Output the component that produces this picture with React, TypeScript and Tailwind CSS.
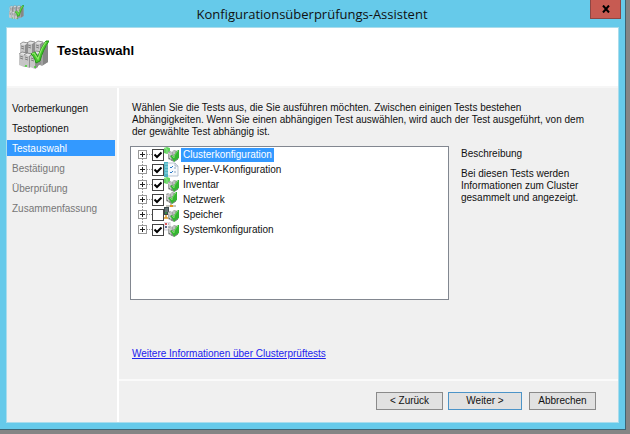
import { useState } from 'react';

type IconKind = 'cluster' | 'document' | 'network' | 'storage' | 'system';

const steps = [
  { label: 'Vorbemerkungen', state: 'done' },
  { label: 'Testoptionen', state: 'done' },
  { label: 'Testauswahl', state: 'active' },
  { label: 'Bestätigung', state: 'open' },
  { label: 'Überprüfung', state: 'open' },
  { label: 'Zusammenfassung', state: 'open' },
];

const tests: { id: string; label: string; icon: IconKind; checked: boolean }[] = [
  { id: 'cluster', label: 'Clusterkonfiguration', icon: 'cluster', checked: true },
  { id: 'hyperv', label: 'Hyper-V-Konfiguration', icon: 'document', checked: true },
  { id: 'inventory', label: 'Inventar', icon: 'cluster', checked: true },
  { id: 'network', label: 'Netzwerk', icon: 'network', checked: true },
  { id: 'storage', label: 'Speicher', icon: 'storage', checked: false },
  { id: 'system', label: 'Systemkonfiguration', icon: 'system', checked: true },
];

const servers = [
  [16, 1], [8, 1], [1, 2],
  [14, 11], [0, 12], [5, 13], [11, 14],
];

const ServerCheckIcon = ({ className }: { className: string }) => (
  <svg className={className} viewBox="0 0 30 30" aria-hidden="true">
    <path d="M19 6l6-4 4 2v18l-6 4-4-2z" fill="#a2a2a2" />
    <path d="M24 8l5-3v17l-5 3z" fill="#868686" />
    {servers.map(([x, y]) => (
      <g key={`${x}-${y}`}>
        <path d={`M${x} ${y + 2}l3-2 5 1-3 2z`} fill="#e4e4e4" />
        <path d={`M${x} ${y + 2}l5 1v12l-5-2z`} fill="#c6c6c6" />
        <path d={`M${x + 5} ${y + 3}l3-2v12l-3 2z`} fill="#8f8f8f" />
        <path d={`M${x + 1} ${y + 4}l3 1M${x + 1} ${y + 6}l3 1`} stroke="#6f6f6f" strokeWidth="0.8" />
        <path d={`M${x} ${y + 2}l3-2 5 1`} stroke="#707070" strokeWidth="0.7" fill="none" />
      </g>
    ))}
    <path d="M6 26h2M15 27h2" stroke="#3fd12c" strokeWidth="1.5" />
    <path d="M12 14l4-2 3 5c2-7 5-12 8-16h3c-4 6-7 12-9 20l-4 2c-1-4-2-6-5-9z" fill="#45c92b" stroke="#249318" strokeWidth="1" />
    <path d="M13 14l2-1 4 6c2-7 4-12 8-17" stroke="#93ea6c" strokeWidth="1.2" fill="none" />
  </svg>
);

const TestIcon = ({ kind }: { kind: IconKind }) => {
  if (kind === 'document') {
    return (
      <svg className="h-[15px] w-[15px]" viewBox="0 0 15 15" aria-hidden="true">
        <path d="M3 1h8l3 3v10H3z" fill="#f6f9fc" stroke="#a9b6c6" strokeWidth="0.8" />
        <path d="M0 0h4v15H0z" fill="#4fb3c4" />
        <path d="M1 2h3M1 5h3M1 8h3M1 11h3" stroke="#9addE4" />
        <path d="M11 1v3h3" fill="none" stroke="#9aa9ba" strokeWidth="0.8" />
        <path d="M6 5l1 1 2-2M6 10l1 1 2-2" fill="none" stroke="#2d79c7" />
        <path d="M10 6h2M10 10h2" stroke="#8ba6c2" />
      </svg>
    );
  }
  return (
    <svg className="h-[15px] w-[15px]" viewBox="0 0 15 15" aria-hidden="true">
      {kind === 'cluster' && (
        <>
          <path d="M0 1l3-1 3 1v5l-3 1-3-1z" fill="#5fd45c" />
          <path d="M0 1l3 1v5" fill="none" stroke="#a8e8a2" strokeWidth="0.7" />
        </>
      )}
      {kind === 'storage' && (
        <>
          <path d="M0 0h5v8H0z" fill="#3d4a4d" />
          <path d="M1 2h3M1 4h3" stroke="#99b0ac" strokeWidth="0.8" />
          <path d="M1 6h2" stroke="#35c544" />
          <path d="M2 8v3M0 11h5" stroke="#dc9a2a" strokeWidth="1.5" />
        </>
      )}
      {kind === 'system' && (
        <>
          <path d="M0 0h6v8H0z" fill="#f4f4f8" stroke="#b6b6c2" strokeWidth="0.6" />
          <path d="M1 2h2" stroke="#d62222" strokeWidth="1.5" />
          <path d="M1 5h2" stroke="#2b3a66" strokeWidth="1.5" />
          <path d="M4 2h1M4 5h1" stroke="#888" />
        </>
      )}
      <g transform={kind === 'network' ? 'translate(-2 -3)' : undefined}>
        <path d="M4 5l2-1 2 1 2-2 4 1v8l-4 3-6-3z" fill="#a4a8a6" />
        <path d="M4 6l2 1v5M7 5v3M10 4v3" stroke="#dcdcdc" fill="none" />
        <path d="M5 11l1 1M8 12v2" stroke="#6c7370" />
        <path d="M6 9l2-1 2 2c0-3 2-5 4-7h1v8l-5 4c-1-2-2-4-4-6z" fill="#35b532" />
        <path d="M8 9l2 2c0-3 2-5 4-7" stroke="#7bdc68" fill="none" />
        <path d="M11 14l3-2" stroke="#77807a" />
      </g>
      {kind === 'network' && (
        <>
          <path d="M7 11v3M2 14h10" stroke="#8b8b7a" />
          <path d="M6 13h3v2H6z" fill="#e2921f" />
        </>
      )}
    </svg>
  );
};

const TestRow = ({ test, selected, last }: { test: (typeof tests)[number]; selected: boolean; last: boolean }) => {
  const [checked, setChecked] = useState(test.checked);

  return (
    <li className="flex h-[15px] items-center">
      <button type="button" aria-label={`${test.label} erweitern`} className="h-[15px] w-[9px] shrink-0">
        <svg className="block h-[15px] w-[9px]" viewBox="0 0 9 15" shapeRendering="crispEdges" aria-hidden="true">
          {!last && <path d="M4.5 12v3" stroke="#999" strokeDasharray="1 1" />}
          {!selected && <path d="M4.5 0v3" stroke="#999" strokeDasharray="1 1" />}
          <path d="M0.5 3.5h8v8h-8z" fill="#fff" stroke="#999" />
          <path d="M2 7.5h5M4.5 5v5" stroke="#222" />
        </svg>
      </button>
      <span className="w-[5px] shrink-0 border-t border-dotted border-[#999]" />
      <label className="flex h-[15px] items-center">
        <span className="grid h-3 w-3 shrink-0">
          <input
            type="checkbox"
            checked={checked}
            onChange={() => setChecked(!checked)}
            className="col-start-1 row-start-1 h-3 w-3 appearance-none border border-[#444] bg-white"
          />
          {checked && (
            <svg className="pointer-events-none col-start-1 row-start-1 h-3 w-3" viewBox="0 0 12 12" aria-hidden="true">
              <path d="M2.5 5.5L5 8l4.5-4.5" fill="none" stroke="#000" strokeWidth="2" />
            </svg>
          )}
        </span>
        <TestIcon kind={test.icon} />
        <span
          className={
            selected
              ? 'ml-[2px] h-[14px] bg-[#3399ff] px-[2px] leading-[14px] text-white'
              : 'ml-[2px] h-[14px] px-[2px] leading-[14px]'
          }
        >
          {test.label}
        </span>
      </label>
    </li>
  );
};

const App = () => {
  return (
    <div className="h-screen bg-[#858585] pr-1 pb-1 font-['Liberation_Sans',Arial,sans-serif] text-[10px] leading-3 text-[#111]">
      <div className="flex h-full flex-col border-r border-b border-[#3d6575] bg-[#66caea]">
        <header className="flex h-[27px] shrink-0 items-start pr-1 pl-[9px]">
          <ServerCheckIcon className="mt-[5px] h-[15px] w-[15px] shrink-0" />
          <h1 className="flex-1 pl-[10px] text-center font-['Open_Sans','Noto_Sans',sans-serif] text-[13px] leading-7">
            Konfigurationsüberprüfungs-Assistent
          </h1>
          <button
            type="button"
            aria-label="Schließen"
            className="flex h-[19px] w-[31px] items-center justify-center border border-t-0 border-[#8d4744] bg-[#c75b52]"
          >
            <svg className="h-2 w-2" viewBox="0 0 8 8" aria-hidden="true">
              <path d="M1 0.5l6 7M7 0.5l-6 7" stroke="#000" strokeWidth="2" />
            </svg>
          </button>
        </header>

        <div className="mx-[6px] mb-[6px] flex flex-1 flex-col border border-[#a9dcec] bg-[#f0f0f0]">
          <div className="flex h-[60px] shrink-0 items-start border-b-2 border-[#f6f6f6] bg-white pt-3 pl-3">
            <ServerCheckIcon className="h-[30px] w-[30px]" />
            <h2 className="ml-2 pt-[3px] text-[13px] leading-4 font-bold text-black">Testauswahl</h2>
          </div>

          <div className="flex flex-1">
            <nav className="w-[112px] shrink-0 border-r-2 border-white pt-3 pr-[2px]">
              <ol className="flex flex-col gap-1">
                {steps.map((step) => (
                  <li
                    key={step.label}
                    aria-current={step.state === 'active' ? 'step' : undefined}
                    className={
                      step.state === 'active'
                        ? 'h-4 bg-[#3399ff] pl-[5px] leading-[18px] text-white'
                        : step.state === 'open'
                          ? 'h-4 pl-[5px] leading-[18px] text-[#777]'
                          : 'h-4 pl-[5px] leading-[18px]'
                    }
                  >
                    {step.label}
                  </li>
                ))}
              </ol>
            </nav>

            <div className="flex min-w-0 flex-1 flex-col">
              <main className="flex-1 pt-[14px] pr-5 pl-[11px]">
                <p className="pl-[2px]">
                  Wählen Sie die Tests aus, die Sie ausführen möchten. Zwischen einigen Tests bestehen
                  <br />
                  Abhängigkeiten. Wenn Sie einen abhängigen Test auswählen, wird auch der Test ausgeführt, von dem
                  <br />
                  der gewählte Test abhängig ist.
                </p>

                <div className="mt-2 flex gap-3">
                  <div className="h-[154px] flex-1 border border-[#828790] bg-white">
                    <ul className="pl-[7px]">
                      {tests.map((test, index) => (
                        <TestRow
                          key={test.id}
                          test={test}
                          selected={test.id === 'cluster'}
                          last={index === tests.length - 1}
                        />
                      ))}
                    </ul>
                  </div>
                  <section className="w-[137px] pt-[2px]">
                    <h3>Beschreibung</h3>
                    <p className="mt-2">Bei diesen Tests werden Informationen zum Cluster gesammelt und angezeigt.</p>
                  </section>
                </div>

                <a href="#clusterprueftests" className="mt-12 ml-[2px] inline-block text-[#2222ee] underline">
                  Weitere Informationen über Clusterprüftests
                </a>
              </main>

              <footer className="flex h-[43px] shrink-0 items-start justify-end border-t-2 border-[#fafafa] pt-[11px] pr-[22px]">
                <button type="button" className="h-[18px] w-[67px] border border-[#8a8a8a] bg-[#e1e1e1]">
                  &lt; Zurück
                </button>
                <button type="button" className="ml-[5px] h-[18px] w-[74px] border border-[#4c94c8] bg-[#e1e1e1]">
                  Weiter &gt;
                </button>
                <button type="button" className="ml-[7px] h-[18px] w-[67px] border border-[#8a8a8a] bg-[#e1e1e1]">
                  Abbrechen
                </button>
              </footer>
            </div>
          </div>
        </div>
      </div>
    </div>
  );
};

export default App;
